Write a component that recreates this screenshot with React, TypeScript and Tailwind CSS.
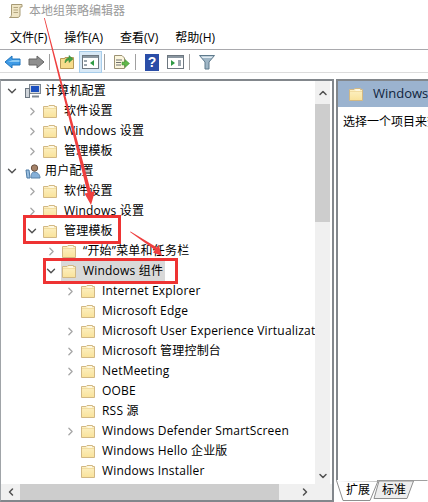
import { ChevronDown, ChevronRight, ChevronUp, ChevronLeft } from "lucide-react";

type Row = {
  label: string;
  indent: number;
  arrow?: "open" | "closed";
  icon?: "folder" | "pc" | "user";
  selected?: boolean;
};

const rows: Row[] = [
  { label: "计算机配置", indent: 0, arrow: "open", icon: "pc" },
  { label: "软件设置", indent: 1, arrow: "closed" },
  { label: "Windows 设置", indent: 1, arrow: "closed" },
  { label: "管理模板", indent: 1, arrow: "closed" },
  { label: "用户配置", indent: 0, arrow: "open", icon: "user" },
  { label: "软件设置", indent: 1, arrow: "closed" },
  { label: "Windows 设置", indent: 1, arrow: "closed" },
  { label: "管理模板", indent: 1, arrow: "open" },
  { label: "“开始”菜单和任务栏", indent: 2, arrow: "closed" },
  { label: "Windows 组件", indent: 2, arrow: "open", selected: true },
  { label: "Internet Explorer", indent: 3, arrow: "closed" },
  { label: "Microsoft Edge", indent: 3 },
  { label: "Microsoft User Experience Virtualization", indent: 3, arrow: "closed" },
  { label: "Microsoft 管理控制台", indent: 3, arrow: "closed" },
  { label: "NetMeeting", indent: 3, arrow: "closed" },
  { label: "OOBE", indent: 3 },
  { label: "RSS 源", indent: 3 },
  { label: "Windows Defender SmartScreen", indent: 3, arrow: "closed" },
  { label: "Windows Hello 企业版", indent: 3 },
  { label: "Windows Installer", indent: 3 },
];

const indents = ["w-[2px]", "w-[22px]", "w-[41px]", "w-[60px]"];

function Folder() {
  return (
    <svg width="16" height="15" viewBox="0 0 16 15" className="shrink-0">
      <defs>
        <linearGradient id="fld" x1="0" y1="0" x2="0" y2="1">
          <stop offset="0" stopColor="#fdf2c8" />
          <stop offset="1" stopColor="#f9e29a" />
        </linearGradient>
      </defs>
      <path d="M1.5 2.5 H6 L7 1.5 H12.5 V2.5 H14.5 V13.5 H1.5 Z" fill="url(#fld)" stroke="#d2b884" />
      <path d="M7.5 2.5 H12 V3.5 H7.5 Z" fill="#ffffff" />
      <path d="M2 4.5 H14" stroke="#f2dca0" />
    </svg>
  );
}

function PcIcon() {
  return (
    <svg width="16" height="16" viewBox="0 0 16 16" className="shrink-0">
      <rect x="4.5" y="1.5" width="11" height="9" fill="#d5d9de" stroke="#7d8791" />
      <rect x="6" y="3" width="8" height="6" fill="#1c50c0" />
      <rect x="0.5" y="5.5" width="4" height="9" fill="#cfd4da" stroke="#6c7681" />
      <path d="M7 13.5 H14" stroke="#7d8791" strokeWidth="2" />
    </svg>
  );
}

function UserIcon() {
  return (
    <svg width="16" height="16" viewBox="0 0 16 16" className="shrink-0">
      <path d="M9 9 C12 9 15 11 15 15 H6 C6 11 7 9 9 9Z" fill="#86b0d8" stroke="#5b83a8" />
      <circle cx="9.5" cy="5" r="3.2" fill="#a58268" stroke="#6b5343" />
      <path d="M1 7 L4 7 L5 15 L2 15 Z" fill="#9cc0e0" stroke="#4c7ba6" />
    </svg>
  );
}

function ToolbarIcons() {
  return (
    <div className="flex items-center h-[22px] pl-[4px]">
      <svg width="18" height="16" viewBox="0 0 18 16" className="mr-[5px]">
        <path d="M1 8 L8 2 V5 H16 V11 H8 V14 Z" fill="#3f9be6" stroke="#1f74bd" />
        <path d="M8.5 6 H15.5 V8 H4 Z" fill="#8ccbf5" />
      </svg>
      <svg width="18" height="16" viewBox="0 0 18 16" className="mr-[4px]">
        <path d="M17 8 L10 2 V5 H2 V11 H10 V14 Z" fill="#8e8e8e" stroke="#666666" />
      </svg>
      <div className="w-px h-[16px] bg-[#a0a0a0] mr-[9px]" />
      <svg width="16" height="16" viewBox="0 0 16 16" className="mr-[4px]">
        <path d="M1.5 4.5 H6 V3.5 H14.5 V14.5 H1.5 Z" fill="#f7dc8c" stroke="#b89a58" />
        <path d="M6 9 C6 5 8 4 10 4 V1.5 L14 5 L10 8.5 V6 C8.5 6 7.5 7 6 9Z" fill="#46a544" stroke="#2f7d32" strokeWidth="0.5" />
      </svg>
      <div className="flex items-center justify-center w-[23px] h-[22px] bg-[#d8e9f7] border border-[#a8cdea] mr-[2px]">
        <svg width="17" height="14" viewBox="0 0 17 14">
          <rect x="0.5" y="0.5" width="16" height="13" fill="#ffffff" stroke="#6d7780" />
          <rect x="1" y="1" width="15" height="2" fill="#8b97a1" />
          <rect x="2" y="5" width="3" height="2" fill="#9aa5ae" />
          <rect x="2" y="9" width="3" height="2" fill="#9aa5ae" />
          <path d="M12 5 L8 8 L12 11 Z" fill="#2f9b45" />
        </svg>
      </div>
      <div className="w-px h-[16px] bg-[#a0a0a0] mr-[8px]" />
      <svg width="17" height="16" viewBox="0 0 17 16" className="mr-[5px]">
        <path d="M1.5 1.5 H9 L11.5 4 V14.5 H1.5 Z" fill="#fbf6dd" stroke="#9c9274" />
        <path d="M3 6 H9 M3 8.5 H8 M3 11 H8" stroke="#6f6f6f" />
        <path d="M9 8 H12 V5.5 L16.5 9.5 L12 13.5 V11 H9 Z" fill="#62b84a" stroke="#3d8c35" strokeWidth="0.5" />
      </svg>
      <div className="w-px h-[16px] bg-[#a0a0a0] mr-[9px]" />
      <div className="flex items-center justify-center w-[14px] h-[17px] bg-[#2b4ea8] text-white font-bold text-[14px] leading-none mr-[8px] font-['Liberation_Sans',sans-serif]">
        ?
      </div>
      <svg width="17" height="14" viewBox="0 0 17 14" className="mr-[5px]">
        <rect x="0.5" y="0.5" width="16" height="13" fill="#ffffff" stroke="#6d7780" />
        <rect x="1" y="1" width="15" height="2" fill="#8b97a1" />
        <rect x="11" y="5" width="3" height="6" fill="#9aa5ae" />
        <path d="M4 5 L8 8 L4 11 Z" fill="#2f9b45" />
      </svg>
      <div className="w-px h-[16px] bg-[#a0a0a0] mr-[9px]" />
      <svg width="16" height="16" viewBox="0 0 16 16">
        <path d="M0.5 1.5 H15.5 L10 8 V15 H6 V8 Z" fill="#9fb6c6" stroke="#5f7a8c" />
        <path d="M2 2.5 H14 L12.5 4 H3.5 Z" fill="#e3edf3" />
      </svg>
    </div>
  );
}

function TreeRow({ row }: { row: Row }) {
  return (
    <div className="flex items-center h-[20px] whitespace-nowrap">
      <div className={`${indents[row.indent]} shrink-0`} />
      <div className="w-[16px] flex justify-center shrink-0">
        {row.arrow === "open" && <ChevronDown size={14} strokeWidth={2.4} className="text-[#505050]" />}
        {row.arrow === "closed" && <ChevronRight size={13} strokeWidth={2.4} className="text-[#a6a6a6]" />}
      </div>
      <div className={`${row.indent === 0 ? "w-[5px]" : "w-[2px]"} shrink-0`} />
      <div className={`flex items-center h-[20px] pr-[2px] ${row.selected ? "bg-[#d9d9d9]" : ""}`}>
        {row.icon === "pc" ? <PcIcon /> : row.icon === "user" ? <UserIcon /> : <Folder />}
        <span className={`${row.icon ? "ml-[4px]" : "ml-[6px]"} text-[12px] tracking-[0.2px] text-black`}>{row.label}</span>
      </div>
    </div>
  );
}

export default function App() {
  return (
    <div className="relative w-[428px] h-[502px] bg-white overflow-hidden font-['Open_Sans','Noto_Sans_CJK_SC',sans-serif] text-[12px]">
      {/* Title */}
      <div className="flex items-center h-[22px] pl-[8px]">
        <svg width="16" height="16" viewBox="0 0 16 16">
          <path d="M3.5 1.5 H14 V4 H12 V12 C12 14 10.5 14.5 9 14.5 H1.5 C3 14 3.5 13 3.5 11 Z" fill="#efe5c5" stroke="#a89b76" />
          <path d="M5.5 4.5 H10 M5.5 7 H10 M5.5 9.5 H10" stroke="#b3a680" />
        </svg>
        <span className="ml-[5px] text-[#9a9a9a]">本地组策略编辑器</span>
      </div>

      {/* Menu */}
      <div className="flex items-center h-[28px] pt-[5px] border-b border-[#a9a9ad] pl-[10px] gap-[17px] text-black">
        <span>文件(F)</span>
        <span>操作(A)</span>
        <span>查看(V)</span>
        <span>帮助(H)</span>
      </div>

      {/* Toolbar */}
      <div className="h-[23px] pt-px border-b border-[#dcdcdc]">
        <ToolbarIcons />
      </div>

      {/* Panels */}
      <div className="flex h-[429px] pt-[6px]">
        <div className="flex flex-col w-[334px] h-[423px] border-t-2 border-r-2 border-b-2 border-l border-t-[#82878c] border-r-[#82878c] border-b-[#82878c] border-l-[#a0a4a8]">
          <div className="flex flex-1 min-h-0 pl-px">
            <div className="flex-1 min-w-0 overflow-hidden">
              {rows.map((row, i) => (
                <TreeRow key={i} row={row} />
              ))}
            </div>
            <div className="flex flex-col w-[15px] mr-[2px] bg-[#f0f0f0]">
              <div className="flex justify-center items-center h-[23px] shrink-0">
                <ChevronUp size={12} strokeWidth={3} className="text-[#505050]" />
              </div>
              <div className="h-[118px] bg-[#cdcdcd]" />
              <div className="flex-1" />
              <div className="flex justify-center items-center h-[16px] shrink-0">
                <ChevronDown size={12} strokeWidth={3} className="text-[#505050]" />
              </div>
            </div>
          </div>
          <div className="flex h-[16px] bg-[#f0f0f0] pl-px shrink-0 items-center">
            <div className="flex justify-center w-[18px]">
              <ChevronLeft size={12} strokeWidth={3} className="text-[#505050]" />
            </div>
            <div className="w-[259px] h-full bg-[#cdcdcd]" />
            <div className="flex-1 flex justify-end pr-[21px]">
              <ChevronRight size={12} strokeWidth={3} className="text-[#505050]" />
            </div>
          </div>
        </div>

        <div className="flex flex-col flex-1 ml-[2px]">
          <div className="flex flex-col h-[401px] border-t-2 border-l-2 border-[#82878c]">
            <div className="flex items-center h-[26px] bg-[#9bb3cf] pl-[10px] overflow-hidden whitespace-nowrap">
              <Folder />
              <span className="ml-[9px] text-[13px] text-[#10243c]">Windows 组件</span>
            </div>
            <div className="pl-[5px] pt-[6px] whitespace-nowrap overflow-hidden text-black">选择一个项目来查看它的描述。</div>
          </div>
          <div className="relative flex h-[22px] pl-[10px] pt-[1px] gap-[12px] text-black">
            <svg className="absolute left-0 top-0" width="92" height="22" viewBox="0 0 92 22">
              <path d="M0.5 0.5 H91.5" stroke="#a0a0a0" fill="none" />
              <path d="M43 1 L77.5 1 L71 18.5 L38 18.5 Z" fill="#eeeeee" stroke="#8f8f8f" />
              <path d="M0.5 0.5 L7 20.5 L34 20.5 L42 1 Z" fill="#ffffff" stroke="#8f8f8f" />
              <path d="M1 0.5 H41" stroke="#ffffff" />
            </svg>
            <span className="relative">扩展</span>
            <span className="relative">标准</span>
          </div>
        </div>
      </div>

      {/* red annotations over the screenshot */}
      <div className="absolute left-[23px] top-[215px] w-[98px] h-[29px] border-[3px] border-[#ee3333]" />
      <div className="absolute left-[43px] top-[258px] w-[135px] h-[26px] border-[3px] border-[#ee3333]" />
      <svg className="absolute left-0 top-0" width="428" height="502" viewBox="0 0 428 502">
        <path d="M44 18 L87.5 193 L84.5 193.5 L91 205 L95 191 L91 192 L44.8 18 Z" fill="#ef3f3f" />
        <path d="M130 232 L155 250 L153 252.5 L162 256 L158.5 244.5 L157 247.5 L130.6 231.5 Z" fill="#ef3f3f" />
      </svg>
    </div>
  );
}
